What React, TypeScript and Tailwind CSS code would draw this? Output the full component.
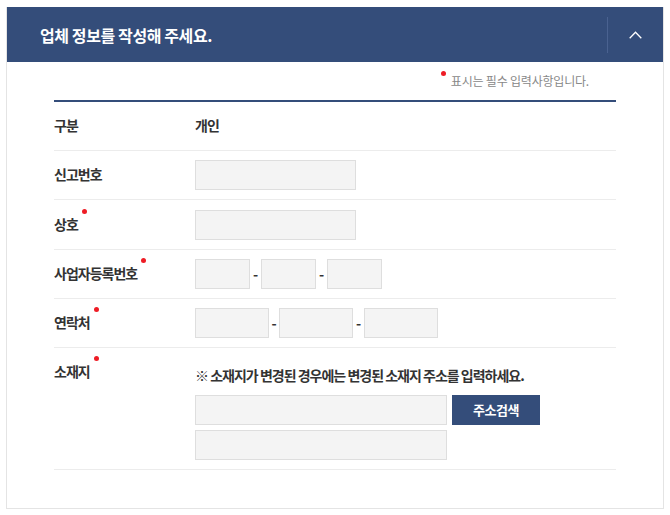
import type { ReactNode } from 'react';

const font = { fontFamily: '"Noto Sans CJK KR", "Noto Sans", sans-serif' };

function Req() {
  return <span className="absolute -right-[9px] -top-[5px] h-[5px] w-[5px] rounded-full bg-[#ee1c25]" />;
}

function Label({ children, required }: { children: ReactNode; required?: boolean }) {
  return (
    <div className="flex w-[141px] shrink-0 items-center">
      <span className="relative -top-px text-[14px] font-bold leading-[20px] tracking-[-1px] text-[#333]">
        {children}
        {required && <Req />}
      </span>
    </div>
  );
}

function Field({ w }: { w: string }) {
  return <input className={`h-[30px] border border-[#dedede] bg-[#f4f4f4] outline-none ${w}`} />;
}

function Dash({ w }: { w: string }) {
  return <span className={`text-center text-[14px] font-bold text-[#333] ${w}`}>-</span>;
}

export default function App() {
  return (
    <div style={font} className="bg-white pt-[7px] pl-[6px]">
      <div className="w-[658px] border border-[#e4e4e4] border-t-0">
        <div className="flex h-[55px] items-center bg-[#344d7a] pl-[33px]">
          <h2 className="flex-1 text-[16px] font-bold tracking-[-0.4px] text-white">업체 정보를 작성해 주세요.</h2>
          <div className="h-[36px] w-px bg-[#4a6290]" />
          <button className="flex w-[55px] items-center justify-center">
            <svg width="13" height="8" viewBox="0 0 13 8" fill="none">
              <path d="M0.7 7.3 L6.5 1.3 L12.3 7.3" stroke="white" strokeWidth="1.3" />
            </svg>
          </button>
        </div>

        <div className="px-[47px] pb-[38px]">
          <div className="flex h-[38px] items-center justify-end pr-[27px]">
            <span className="relative text-[12px] tracking-[-0.2px] text-[#888]">
              <span className="absolute -left-[10px] -top-[1px] h-[5px] w-[5px] rounded-full bg-[#ee1c25]" />
              표시는 필수 입력사항입니다.
            </span>
          </div>
          <div className="h-[2px] bg-[#344d7a]" />

          <div className="flex h-[49px] items-center border-b border-[#ececec]">
            <Label>구분</Label>
            <span className="-mt-[2px] text-[14px] font-bold tracking-[-1px] text-[#333]">개인</span>
          </div>

          <div className="flex h-[49px] items-center border-b border-[#ececec]">
            <Label>신고번호</Label>
            <Field w="w-[161px]" />
          </div>

          <div className="flex h-[50px] items-center border-b border-[#ececec]">
            <Label required>상호</Label>
            <Field w="w-[161px]" />
          </div>

          <div className="flex h-[49px] items-center border-b border-[#ececec]">
            <Label required>사업자등록번호</Label>
            <div className="flex items-center">
              <Field w="w-[55px]" />
              <Dash w="w-[11px]" />
              <Field w="w-[55px]" />
              <Dash w="w-[11px]" />
              <Field w="w-[55px]" />
            </div>
          </div>

          <div className="flex h-[49px] items-center border-b border-[#ececec]">
            <Label required>연락처</Label>
            <div className="flex items-center">
              <Field w="w-[74px]" />
              <Dash w="w-[10px]" />
              <Field w="w-[74px]" />
              <Dash w="w-[11px]" />
              <Field w="w-[74px]" />
            </div>
          </div>

          <div className="flex border-b border-[#ececec] pb-[9px]">
            <div className="pt-[14px]">
              <Label required>소재지</Label>
            </div>
            <div className="pt-[19px]">
              <p className="text-[14px] font-bold leading-[16px] tracking-[-1px] text-[#333]">
                ※ 소재지가 변경된 경우에는 변경된 소재지 주소를 입력하세요.
              </p>
              <div className="mt-[12px] flex gap-[5px]">
                <Field w="w-[252px]" />
                <button className="h-[30px] w-[88px] bg-[#344d7a] text-[13px] font-bold tracking-[-0.5px] text-white">
                  주소검색
                </button>
              </div>
              <div className="mt-[5px]">
                <Field w="w-[252px]" />
              </div>
            </div>
          </div>
        </div>
      </div>
    </div>
  );
}
